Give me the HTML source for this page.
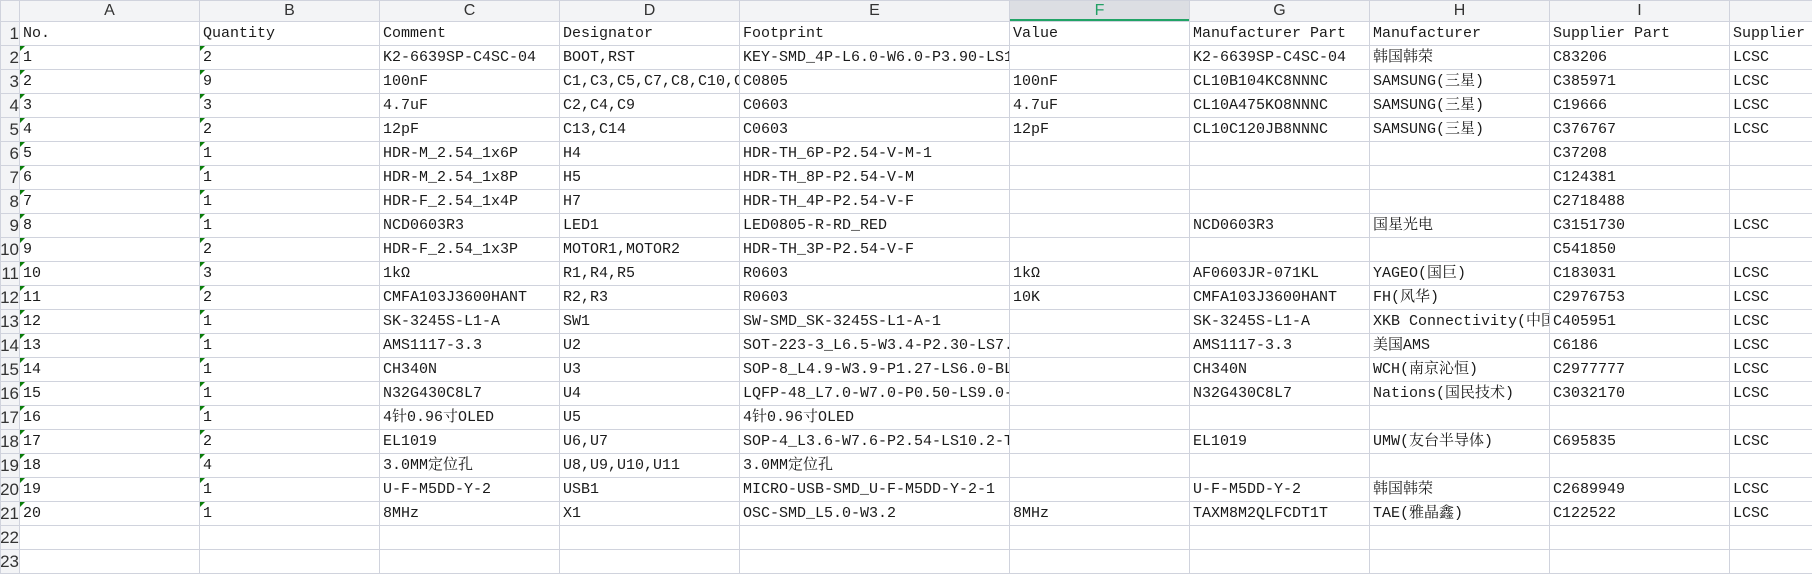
<!DOCTYPE html><html><head><meta charset="utf-8"><style>
body{margin:0;width:1812px;height:554px;overflow:hidden;background:#fff;font-family:"Liberation Mono","Noto Serif CJK SC",monospace;}
table{border-collapse:collapse;table-layout:fixed;width:1812px;}
td{height:23px;border:1px solid #d0d3dd;padding:0 0 0 3px;font-size:15px;color:#1a1a1a;white-space:nowrap;overflow:hidden;position:relative;line-height:23px;}
tr.h td{height:20px;background:#f3f4f6;font-family:"Liberation Sans",sans-serif;font-size:16px;color:#333;text-align:center;padding:0;line-height:20px;}
tr.h td.sel{background:#dcdee3;color:#23a065;box-shadow:inset 0 -2px 0 #21a366;}
td.r{background:#f3f4f6;text-align:right;padding:0;font-family:"Liberation Sans",sans-serif;font-size:17px;color:#333;direction:rtl;}
td.t::before{content:"";position:absolute;left:0;top:0;border-top:5px solid #0a7d0a;border-right:5px solid transparent;}
</style></head><body>
<table>
<colgroup><col style="width:19px"><col style="width:180px"><col style="width:180px"><col style="width:180px"><col style="width:180px"><col style="width:270px"><col style="width:180px"><col style="width:180px"><col style="width:180px"><col style="width:180px"><col style="width:83px"></colgroup>
<tr class="h"><td></td><td>A</td><td>B</td><td>C</td><td>D</td><td>E</td><td class="sel">F</td><td>G</td><td>H</td><td>I</td><td style="text-align:left"></td></tr>
<tr><td class="r">1</td><td>No.</td><td>Quantity</td><td>Comment</td><td>Designator</td><td>Footprint</td><td>Value</td><td>Manufacturer Part</td><td>Manufacturer</td><td>Supplier Part</td><td>Supplier</td></tr>
<tr><td class="r">2</td><td class="t">1</td><td class="t">2</td><td>K2-6639SP-C4SC-04</td><td>BOOT,RST</td><td>KEY-SMD_4P-L6.0-W6.0-P3.90-LS10.0</td><td></td><td>K2-6639SP-C4SC-04</td><td>韩国韩荣</td><td>C83206</td><td>LCSC</td></tr>
<tr><td class="r">3</td><td class="t">2</td><td class="t">9</td><td>100nF</td><td>C1,C3,C5,C7,C8,C10,C11</td><td>C0805</td><td>100nF</td><td>CL10B104KC8NNNC</td><td>SAMSUNG(三星)</td><td>C385971</td><td>LCSC</td></tr>
<tr><td class="r">4</td><td class="t">3</td><td class="t">3</td><td>4.7uF</td><td>C2,C4,C9</td><td>C0603</td><td>4.7uF</td><td>CL10A475KO8NNNC</td><td>SAMSUNG(三星)</td><td>C19666</td><td>LCSC</td></tr>
<tr><td class="r">5</td><td class="t">4</td><td class="t">2</td><td>12pF</td><td>C13,C14</td><td>C0603</td><td>12pF</td><td>CL10C120JB8NNNC</td><td>SAMSUNG(三星)</td><td>C376767</td><td>LCSC</td></tr>
<tr><td class="r">6</td><td class="t">5</td><td class="t">1</td><td>HDR-M_2.54_1x6P</td><td>H4</td><td>HDR-TH_6P-P2.54-V-M-1</td><td></td><td></td><td></td><td>C37208</td><td></td></tr>
<tr><td class="r">7</td><td class="t">6</td><td class="t">1</td><td>HDR-M_2.54_1x8P</td><td>H5</td><td>HDR-TH_8P-P2.54-V-M</td><td></td><td></td><td></td><td>C124381</td><td></td></tr>
<tr><td class="r">8</td><td class="t">7</td><td class="t">1</td><td>HDR-F_2.54_1x4P</td><td>H7</td><td>HDR-TH_4P-P2.54-V-F</td><td></td><td></td><td></td><td>C2718488</td><td></td></tr>
<tr><td class="r">9</td><td class="t">8</td><td class="t">1</td><td>NCD0603R3</td><td>LED1</td><td>LED0805-R-RD_RED</td><td></td><td>NCD0603R3</td><td>国星光电</td><td>C3151730</td><td>LCSC</td></tr>
<tr><td class="r">10</td><td class="t">9</td><td class="t">2</td><td>HDR-F_2.54_1x3P</td><td>MOTOR1,MOTOR2</td><td>HDR-TH_3P-P2.54-V-F</td><td></td><td></td><td></td><td>C541850</td><td></td></tr>
<tr><td class="r">11</td><td class="t">10</td><td class="t">3</td><td>1kΩ</td><td>R1,R4,R5</td><td>R0603</td><td>1kΩ</td><td>AF0603JR-071KL</td><td>YAGEO(国巨)</td><td>C183031</td><td>LCSC</td></tr>
<tr><td class="r">12</td><td class="t">11</td><td class="t">2</td><td>CMFA103J3600HANT</td><td>R2,R3</td><td>R0603</td><td>10K</td><td>CMFA103J3600HANT</td><td>FH(风华)</td><td>C2976753</td><td>LCSC</td></tr>
<tr><td class="r">13</td><td class="t">12</td><td class="t">1</td><td>SK-3245S-L1-A</td><td>SW1</td><td>SW-SMD_SK-3245S-L1-A-1</td><td></td><td>SK-3245S-L1-A</td><td>XKB Connectivity(中国)</td><td>C405951</td><td>LCSC</td></tr>
<tr><td class="r">14</td><td class="t">13</td><td class="t">1</td><td>AMS1117-3.3</td><td>U2</td><td>SOT-223-3_L6.5-W3.4-P2.30-LS7.0-BR</td><td></td><td>AMS1117-3.3</td><td>美国AMS</td><td>C6186</td><td>LCSC</td></tr>
<tr><td class="r">15</td><td class="t">14</td><td class="t">1</td><td>CH340N</td><td>U3</td><td>SOP-8_L4.9-W3.9-P1.27-LS6.0-BL</td><td></td><td>CH340N</td><td>WCH(南京沁恒)</td><td>C2977777</td><td>LCSC</td></tr>
<tr><td class="r">16</td><td class="t">15</td><td class="t">1</td><td>N32G430C8L7</td><td>U4</td><td>LQFP-48_L7.0-W7.0-P0.50-LS9.0-BL</td><td></td><td>N32G430C8L7</td><td>Nations(国民技术)</td><td>C3032170</td><td>LCSC</td></tr>
<tr><td class="r">17</td><td class="t">16</td><td class="t">1</td><td>4针0.96寸OLED</td><td>U5</td><td>4针0.96寸OLED</td><td></td><td></td><td></td><td></td><td></td></tr>
<tr><td class="r">18</td><td class="t">17</td><td class="t">2</td><td>EL1019</td><td>U6,U7</td><td>SOP-4_L3.6-W7.6-P2.54-LS10.2-TL</td><td></td><td>EL1019</td><td>UMW(友台半导体)</td><td>C695835</td><td>LCSC</td></tr>
<tr><td class="r">19</td><td class="t">18</td><td class="t">4</td><td>3.0MM定位孔</td><td>U8,U9,U10,U11</td><td>3.0MM定位孔</td><td></td><td></td><td></td><td></td><td></td></tr>
<tr><td class="r">20</td><td class="t">19</td><td class="t">1</td><td>U-F-M5DD-Y-2</td><td>USB1</td><td>MICRO-USB-SMD_U-F-M5DD-Y-2-1</td><td></td><td>U-F-M5DD-Y-2</td><td>韩国韩荣</td><td>C2689949</td><td>LCSC</td></tr>
<tr><td class="r">21</td><td class="t">20</td><td class="t">1</td><td>8MHz</td><td>X1</td><td>OSC-SMD_L5.0-W3.2</td><td>8MHz</td><td>TAXM8M2QLFCDT1T</td><td>TAE(雅晶鑫)</td><td>C122522</td><td>LCSC</td></tr>
<tr><td class="r">22</td><td></td><td></td><td></td><td></td><td></td><td></td><td></td><td></td><td></td><td></td></tr>
<tr><td class="r">23</td><td></td><td></td><td></td><td></td><td></td><td></td><td></td><td></td><td></td><td></td></tr>
</table></body></html>
